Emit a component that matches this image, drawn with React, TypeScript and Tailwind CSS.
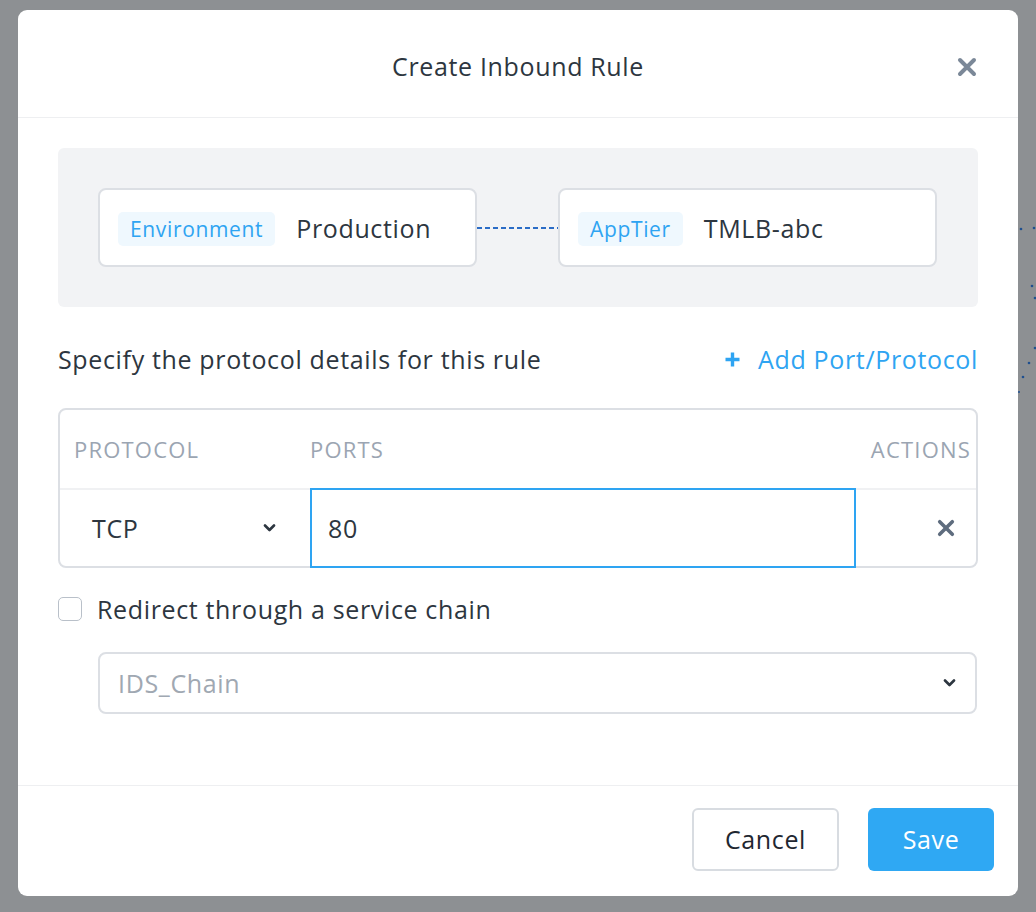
import React from 'react';

const font = { fontFamily: '"Open Sans", "Lato", sans-serif' };

const CloseIcon: React.FC<{ size: number; className?: string }> = ({ size, className }) => (
  <svg width={size} height={size} viewBox="0 0 20 20" className={className}>
    <path d="M3 3 L17 17 M17 3 L3 17" stroke="currentColor" strokeWidth="4" strokeLinecap="round" fill="none" />
  </svg>
);

const Chevron: React.FC<{ className?: string }> = ({ className }) => (
  <svg width="13" height="8" viewBox="0 0 13 8" className={className}>
    <path d="M2 1.5 L6.5 6 L11 1.5" stroke="currentColor" strokeWidth="2.6" strokeLinecap="round" strokeLinejoin="round" fill="none" />
  </svg>
);

const EntityCard: React.FC<{ tag: string; name: string }> = ({ tag, name }) => (
  <div className="w-[379px] h-[79px] shrink-0 bg-white border-2 border-[#dcdfe4] rounded-[8px] flex items-center pl-[18px] pt-[3px]">
    <span className="h-[34px] px-[12px] flex items-center rounded-[5px] bg-[#eff8fe] text-[#2ea4f2] text-[21px] leading-none">{tag}</span>
    <span className="ml-[21px] text-[25px] leading-none text-[#2d3640] -mt-[2px]">{name}</span>
  </div>
);

export default function App() {
  return (
    <div className="relative w-[1036px] h-[912px] bg-[#8d9093] overflow-hidden pt-[10px] pl-[18px] tracking-[0.65px]" style={font}>
      {/* dimmed diagram behind the overlay */}
      <svg className="absolute right-0 top-[220px]" width="18" height="180" viewBox="0 0 18 180">
        <g fill="#1f4f8f">
          <circle cx="3" cy="9" r="1.3" />
          <circle cx="16" cy="8" r="1.3" />
          <circle cx="14" cy="66" r="1.3" />
          <circle cx="17" cy="78" r="1.3" />
          <circle cx="17" cy="128" r="1.3" />
          <circle cx="11" cy="143" r="1.3" />
          <circle cx="5" cy="157" r="1.3" />
          <circle cx="1" cy="172" r="1" />
        </g>
      </svg>

      <div className="w-[1000px] h-[886px] bg-white rounded-[9px] flex flex-col">
        {/* header */}
        <div className="relative h-[108px] shrink-0 flex items-center justify-center border-b border-[#eeeff1]">
          <h1 className="text-[25px] leading-none text-[#2d3640] mt-[6px]">Create Inbound Rule</h1>
          <button className="absolute right-[41px] top-[47px] text-[#7b8898]">
            <CloseIcon size={20} />
          </button>
        </div>

        {/* body */}
        <div className="flex-1 px-[40px] pt-[30px]">
          <div className="bg-[#f2f3f5] rounded-[6px] py-[40px] px-[40px] flex items-center">
            <EntityCard tag="Environment" name="Production" />
            <svg width="81" height="2" viewBox="0 0 81 2" className="shrink-0 mt-[1px]">
              <line x1="0" y1="1" x2="81" y2="1" stroke="#2b6cc6" strokeWidth="2" strokeDasharray="5 3" />
            </svg>
            <EntityCard tag="AppTier" name="TMLB-abc" />
          </div>

          <div className="mt-[37px] h-[30px] flex items-center justify-between">
            <span className="text-[25px] leading-none text-[#2d3640]">Specify the protocol details for this rule</span>
            <button className="flex items-center text-[#2ea4f2] text-[25px] leading-none">
              <svg width="17" height="17" viewBox="0 0 17 17" className="mr-[17px]">
                <path d="M8.5 1.5 V15.5 M1.5 8.5 H15.5" stroke="currentColor" strokeWidth="3.4" fill="none" />
              </svg>
              Add Port/Protocol
            </button>
          </div>

          {/* table */}
          <div className="mt-[34px] border-2 border-[#dcdfe4] rounded-[8px]">
            <div className="h-[80px] flex items-center border-b-2 border-[#f0f1f3] text-[22px] leading-none text-[#9ba5b2] uppercase tracking-[1.2px]">
              <div className="w-[250px] pl-[14px]">Protocol</div>
              <div className="flex-1">Ports</div>
              <div className="pr-[5px]">Actions</div>
            </div>
            <div className="h-[76px] flex">
              <div className="w-[250px] flex items-center pl-[32px] pr-[34px] justify-between">
                <span className="text-[25px] leading-none text-[#2d3640]">TCP</span>
                <Chevron className="text-[#2d3640]" />
              </div>
              <div className="w-[546px] -mt-[2px] h-[80px] border-2 border-[#2ea4f2] flex items-center pl-[16px]">
                <span className="text-[25px] leading-none text-[#2d3640]">80</span>
              </div>
              <div className="flex-1 flex items-center justify-end pr-[21px]">
                <CloseIcon size={18} className="text-[#5e6c7e]" />
              </div>
            </div>
          </div>

          <label className="mt-[29px] h-[24px] flex items-center">
            <span className="w-[24px] h-[24px] rounded-[5px] border-[1.5px] border-[#b9c0c9] bg-white" />
            <span className="ml-[15px] text-[25px] leading-none text-[#2d3640]">Redirect through a service chain</span>
          </label>

          <div className="mt-[31px] ml-[40px] w-[879px] h-[62px] border-2 border-[#dcdfe4] rounded-[8px] flex items-center justify-between pl-[18px] pr-[19px]">
            <span className="text-[25px] leading-none text-[#a0a8b2]">IDS_Chain</span>
            <Chevron className="text-[#2d3640]" />
          </div>
        </div>

        {/* footer */}
        <div className="h-[111px] shrink-0 border-t border-[#eeeff1] flex items-start justify-end pt-[22px] pr-[24px] gap-[29px]">
          <button className="w-[147px] h-[63px] rounded-[6px] border-2 border-[#d8dce1] bg-white text-[25px] text-[#1f2731]">Cancel</button>
          <button className="w-[126px] h-[63px] rounded-[6px] bg-[#2fa8f3] text-[25px] text-white">Save</button>
        </div>
      </div>
    </div>
  );
}
